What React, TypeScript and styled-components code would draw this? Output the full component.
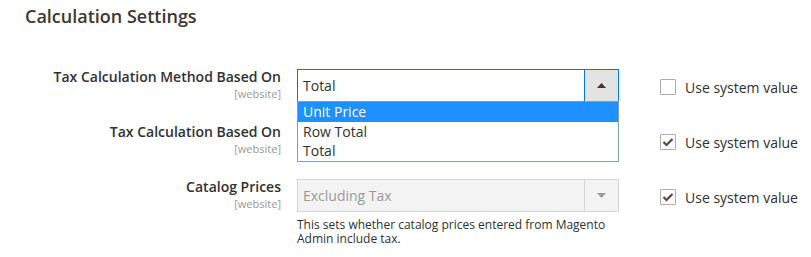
import React from "react";
import styled, { createGlobalStyle } from "styled-components";

const GlobalStyle = createGlobalStyle`
  body {
    margin: 0;
    background: #ffffff;
    font-family: "Open Sans", "Liberation Sans", sans-serif;
    color: #303030;
  }
`;

interface Row {
  label: string;
  value: string;
  inherit: boolean;
  disabled?: boolean;
  open?: boolean;
  note?: string;
}

// the second select sits under the open list, so its value is never seen
const rows: Row[] = [
  { label: "Tax Calculation Method Based On", value: "Total", inherit: false, open: true },
  { label: "Tax Calculation Based On", value: "", inherit: true },
  {
    label: "Catalog Prices",
    value: "Excluding Tax",
    inherit: true,
    disabled: true,
    note: "This sets whether catalog prices entered from Magento Admin include tax.",
  },
];

const options = ["Unit Price", "Row Total", "Total"];

function Arrow({ up, color }: { up?: boolean; color: string }) {
  return (
    <svg width="9" height="5" viewBox="0 0 9 5">
      <polygon points={up ? "0,5 9,5 4.5,0" : "0,0 9,0 4.5,5"} fill={color} />
    </svg>
  );
}

function Check() {
  return (
    <svg width="12" height="10" viewBox="0 0 12 10">
      <polyline points="1.5,5 4.5,8 10.5,2" fill="none" stroke="#514943" strokeWidth="2.2" />
    </svg>
  );
}

export default function App() {
  return (
    <>
      <GlobalStyle />
      <Section>
        <Title>Calculation Settings</Title>
        <Fieldset>
          {rows.map((row) => (
            <FieldRow key={row.label}>
              <Label>
                <span>{row.label}</span>
                <Scope>[website]</Scope>
              </Label>
              <Control>
                <Select focused={row.open} disabled={row.disabled}>
                  <SelectValue>{row.value}</SelectValue>
                  <SelectButton focused={row.open}>
                    <Arrow up={row.open} color="#41362f" />
                  </SelectButton>
                  {row.open && (
                    <OptionList>
                      {options.map((o) => (
                        <Option key={o} active={o === "Unit Price"}>
                          {o}
                        </Option>
                      ))}
                    </OptionList>
                  )}
                </Select>
                {row.note && <Note>{row.note}</Note>}
              </Control>
              <Inherit>
                <CheckBox>{row.inherit && <Check />}</CheckBox>
                <span>Use system value</span>
              </Inherit>
            </FieldRow>
          ))}
        </Fieldset>
      </Section>
    </>
  );
}

const Section = styled.div`
  padding: 6px 0 0 25px;
  width: 786px;
`;

const Title = styled.div`
  font-size: 18px;
  font-weight: 600;
  line-height: 20px;
  color: #41362f;
`;

const Fieldset = styled.div`
  margin-top: 43px;
  margin-left: -25px;
`;

const FieldRow = styled.div`
  display: grid;
  grid-template-columns: 281px 322px auto;
  column-gap: 16px;
  align-items: start;
  margin-bottom: 22px;
`;

const Label = styled.div`
  display: flex;
  flex-direction: column;
  align-items: flex-end;
  text-align: right;
  font-size: 14px;
  font-weight: 600;
  line-height: 16px;
  color: #303030;
`;

const Scope = styled.span`
  margin-top: 3px;
  font-size: 11px;
  font-weight: 400;
  line-height: 12px;
  color: #999999;
`;

const Control = styled.div`
  display: flex;
  flex-direction: column;
`;

const Select = styled.div<{ focused?: boolean; disabled?: boolean }>`
  position: relative;
  display: flex;
  height: 33px;
  box-sizing: border-box;
  border: 1px solid ${(p) => (p.focused ? "#007bdb" : "#adadad")};
  background: ${(p) => (p.disabled ? "#e9e9e9" : "#ffffff")};
  opacity: ${(p) => (p.disabled ? 0.5 : 1)};
`;

const SelectValue = styled.div`
  flex: 1;
  padding-left: 5px;
  font-size: 14px;
  line-height: 31px;
  color: #303030;
`;

const SelectButton = styled.div<{ focused?: boolean }>`
  width: 33px;
  display: flex;
  align-items: center;
  justify-content: center;
  border-left: 1px solid ${(p) => (p.focused ? "#007bdb" : "#adadad")};
  background: ${(p) => (p.focused ? "#e3e3e3" : "transparent")};
`;

const OptionList = styled.div`
  position: absolute;
  top: 100%;
  left: -1px;
  right: -1px;
  z-index: 2;
  background: #ffffff;
  border: 1px solid #7f9db9;
`;

const Option = styled.div<{ active?: boolean }>`
  height: 19.5px;
  padding-left: 5px;
  font-size: 14px;
  line-height: 19.5px;
  background: ${(p) => (p.active ? "#1e90ff" : "#ffffff")};
  color: ${(p) => (p.active ? "#ffffff" : "#303030")};
`;

const Note = styled.div`
  margin-top: 6px;
  font-size: 12px;
  line-height: 14.4px;
  color: #303030;
`;

const Inherit = styled.label`
  display: flex;
  align-items: center;
  gap: 9px;
  height: 20px;
  margin: 8px 0 0 25px;
  font-size: 14px;
  color: #303030;
  white-space: nowrap;
`;

const CheckBox = styled.span`
  width: 16px;
  height: 16px;
  box-sizing: border-box;
  border: 1px solid #adadad;
  border-radius: 1px;
  display: flex;
  align-items: center;
  justify-content: center;
`;
